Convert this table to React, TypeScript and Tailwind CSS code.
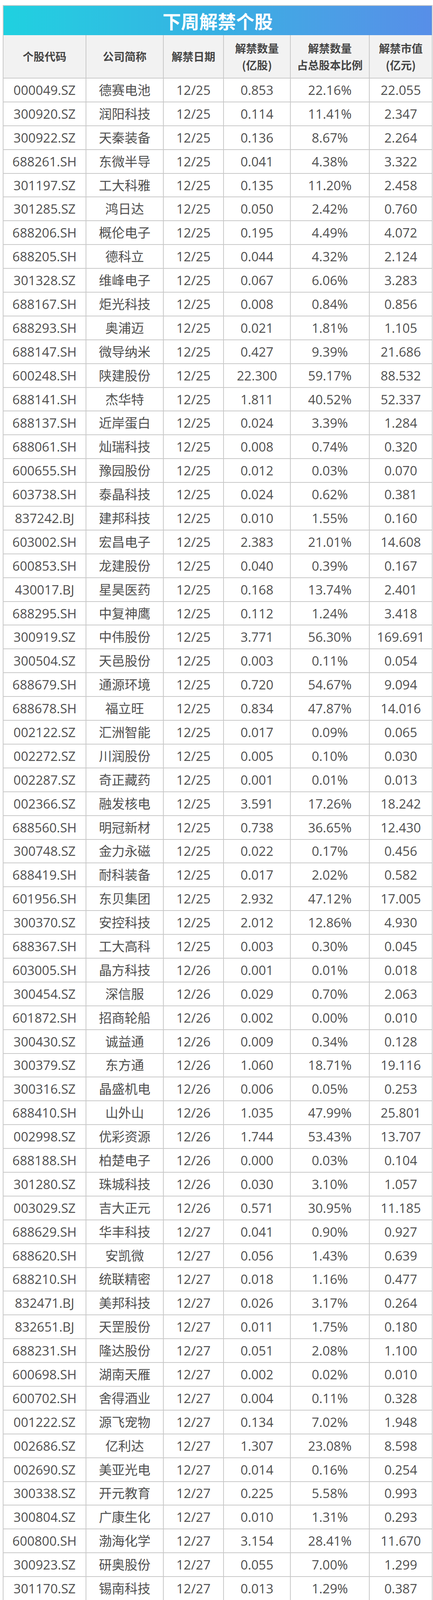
import React from "react";

const raw = `000049.SZ 德赛电池 12/25 0.853 22.16% 22.055
300920.SZ 润阳科技 12/25 0.114 11.41% 2.347
300922.SZ 天秦装备 12/25 0.136 8.67% 2.264
688261.SH 东微半导 12/25 0.041 4.38% 3.322
301197.SZ 工大科雅 12/25 0.135 11.20% 2.458
301285.SZ 鸿日达 12/25 0.050 2.42% 0.760
688206.SH 概伦电子 12/25 0.195 4.49% 4.072
688205.SH 德科立 12/25 0.044 4.32% 2.124
301328.SZ 维峰电子 12/25 0.067 6.06% 3.283
688167.SH 炬光科技 12/25 0.008 0.84% 0.856
688293.SH 奥浦迈 12/25 0.021 1.81% 1.105
688147.SH 微导纳米 12/25 0.427 9.39% 21.686
600248.SH 陕建股份 12/25 22.300 59.17% 88.532
688141.SH 杰华特 12/25 1.811 40.52% 52.337
688137.SH 近岸蛋白 12/25 0.024 3.39% 1.284
688061.SH 灿瑞科技 12/25 0.008 0.74% 0.320
600655.SH 豫园股份 12/25 0.012 0.03% 0.070
603738.SH 泰晶科技 12/25 0.024 0.62% 0.381
837242.BJ 建邦科技 12/25 0.010 1.55% 0.160
603002.SH 宏昌电子 12/25 2.383 21.01% 14.608
600853.SH 龙建股份 12/25 0.040 0.39% 0.167
430017.BJ 星昊医药 12/25 0.168 13.74% 2.401
688295.SH 中复神鹰 12/25 0.112 1.24% 3.418
300919.SZ 中伟股份 12/25 3.771 56.30% 169.691
300504.SZ 天邑股份 12/25 0.003 0.11% 0.054
688679.SH 通源环境 12/25 0.720 54.67% 9.094
688678.SH 福立旺 12/25 0.834 47.87% 14.016
002122.SZ 汇洲智能 12/25 0.017 0.09% 0.065
002272.SZ 川润股份 12/25 0.005 0.10% 0.030
002287.SZ 奇正藏药 12/25 0.001 0.01% 0.013
002366.SZ 融发核电 12/25 3.591 17.26% 18.242
688560.SH 明冠新材 12/25 0.738 36.65% 12.430
300748.SZ 金力永磁 12/25 0.022 0.17% 0.456
688419.SH 耐科装备 12/25 0.017 2.02% 0.582
601956.SH 东贝集团 12/25 2.932 47.12% 17.005
300370.SZ 安控科技 12/25 2.012 12.86% 4.930
688367.SH 工大高科 12/25 0.003 0.30% 0.045
603005.SH 晶方科技 12/26 0.001 0.01% 0.018
300454.SZ 深信服 12/26 0.029 0.70% 2.063
601872.SH 招商轮船 12/26 0.002 0.00% 0.010
300430.SZ 诚益通 12/26 0.009 0.34% 0.128
300379.SZ 东方通 12/26 1.060 18.71% 19.116
300316.SZ 晶盛机电 12/26 0.006 0.05% 0.253
688410.SH 山外山 12/26 1.035 47.99% 25.801
002998.SZ 优彩资源 12/26 1.744 53.43% 13.707
688188.SH 柏楚电子 12/26 0.000 0.03% 0.104
301280.SZ 珠城科技 12/26 0.030 3.10% 1.057
003029.SZ 吉大正元 12/26 0.571 30.95% 11.185
688629.SH 华丰科技 12/27 0.041 0.90% 0.927
688620.SH 安凯微 12/27 0.056 1.43% 0.639
688210.SH 统联精密 12/27 0.018 1.16% 0.477
832471.BJ 美邦科技 12/27 0.026 3.17% 0.264
832651.BJ 天罡股份 12/27 0.011 1.75% 0.180
688231.SH 隆达股份 12/27 0.051 2.08% 1.100
600698.SH 湖南天雁 12/27 0.002 0.02% 0.010
600702.SH 舍得酒业 12/27 0.004 0.11% 0.328
001222.SZ 源飞宠物 12/27 0.134 7.02% 1.948
002686.SZ 亿利达 12/27 1.307 23.08% 8.598
002690.SZ 美亚光电 12/27 0.014 0.16% 0.254
300338.SZ 开元教育 12/27 0.225 5.58% 0.993
300804.SZ 广康生化 12/27 0.010 1.31% 0.293
600800.SH 渤海化学 12/27 3.154 28.41% 11.670
300923.SZ 研奥股份 12/27 0.055 7.00% 1.299
301170.SZ 锡南科技 12/27 0.013 1.29% 0.387
301262.SZ 海看股份 12/27 0.025 0.61% 0.802
301295.SZ 美硕科技 12/27 0.009 1.29% 0.303
301301.SZ 川宁生物 12/27 3.901 17.55% 32.262
300863.SZ 卡倍亿 12/27 0.002 0.17% 0.073
873001.BJ 纬达光电 12/27 1.152 74.99% 7.479
600679.SH 上海凤凰 12/27 0.078 1.52% 0.842
600250.SH 南京商旅 12/27 0.151 4.87% 1.735
600310.SH 广西能源 12/27 2.504 17.08% 9.439
001270.SZ 铖昌科技 12/28 0.067 4.30% 4.181
003028.SZ 振邦智能 12/28 0.822 74.16% 34.820
688496.SH 清越科技 12/28 1.510 33.55% 25.954
688475.SH 萤石网络 12/28 0.202 3.58% 9.711
001230.SZ 劲旅环境 12/28 0.058 5.16% 1.347
603317.SH 天味食品 12/28 0.003 0.02% 0.034
688375.SH 国博电子 12/28 0.088 2.19% 7.159
001301.SZ 尚太科技 12/28 0.995 38.16% 37.851
605179.SH 一鸣食品 12/28 3.400 84.79% 44.812
605377.SH 华旺科技 12/28 1.515 45.60% 28.221
688031.SH 星环科技-U 12/28 0.059 4.90% 3.526
688265.SH 南模生物 12/28 0.007 0.91% 0.263
600549.SH 厦门钨业 12/28 0.036 0.26% 0.604
688206.SH 概伦电子 12/28 0.017 0.40% 0.362
301397.SZ 溯联股份 12/28 0.013 1.29% 0.589
688631.SH 莱斯信息 12/28 0.022 1.33% 0.719
688698.SH 伟创电气 12/29 1.350 64.21% 49.248
836208.BJ 青矩技术 12/29 0.009 1.34% 0.335
688429.SH 时创能源 12/29 0.022 0.56% 0.451
301316.SZ 慧博云通 12/29 0.375 9.37% 8.591
300008.SZ 天海防务 12/29 2.160 12.50% 8.381
300279.SZ 和晶科技 12/29 0.173 3.55% 1.087
688371.SH 菲沃泰 12/29 0.185 5.53% 3.077
603385.SH 惠达卫浴 12/29 0.104 2.72% 0.829
301389.SZ 隆扬电子 12/29 0.104 3.66% 1.917`;

const rows = raw.split("\n").map((l) => l.trim().split(/\s+/));

const grid =
  "grid grid-cols-[212px_198px_154px_171px_202px_161px] border-l-2 border-[#c9c9c9]";

const headers: string[][] = [
  ["个股代码"],
  ["公司简称"],
  ["解禁日期"],
  ["解禁数量", "(亿股)"],
  ["解禁数量", "占总股本比例"],
  ["解禁市值", "(亿元)"],
];

function Row({ r, gapBefore }: { r: string[]; gapBefore?: boolean }) {
  return (
    <div className={gapBefore ? "mt-[5px]" : ""}>
      <div className={grid}>
        {r.map((c, i) => (
          <div
            key={i}
            className="h-[60.9px] flex items-center justify-center border-r-2 border-b-2 border-[#c9c9c9] bg-white text-[33px] leading-none text-[#4f4f4f] whitespace-nowrap"
          >
            {c}
          </div>
        ))}
      </div>
    </div>
  );
}

export default function App() {
  return (
    <div
      className="w-[1108px] h-[6126px] overflow-hidden bg-white pt-[13px]"
      style={{ fontFamily: '"Open Sans", "Noto Sans CJK SC", sans-serif' }}
    >
      <div className="ml-[7px] w-[1100px]">
        <div className="h-[77px] border-t-2 border-l-2 border-r-2 border-[#c9c9c9]">
          <div className="h-full bg-gradient-to-r from-[#1fd1e0] via-[#36b0e3] to-[#578ee8] flex items-center justify-center">
            <span
              className="text-white text-[47px] font-bold leading-none"
              style={{ fontFamily: '"Noto Sans CJK SC", sans-serif' }}
            >
              下周解禁个股
            </span>
          </div>
        </div>
        <div className={grid}>
          {headers.map((h, i) => (
            <div
              key={i}
              className="h-[111px] flex flex-col items-center justify-center border-r-2 border-b-2 border-[#c9c9c9] bg-[#f2f2f2] text-[28px] font-bold text-[#454545] leading-[43px] whitespace-nowrap"
              style={{ fontFamily: '"Noto Sans CJK SC", sans-serif' }}
            >
              {h.map((t, j) => (
                <span key={j}>{t}</span>
              ))}
            </div>
          ))}
        </div>
        {rows.map((r, i) => (
          <Row key={i} r={r} gapBefore={i === 65} />
        ))}
      </div>
    </div>
  );
}
